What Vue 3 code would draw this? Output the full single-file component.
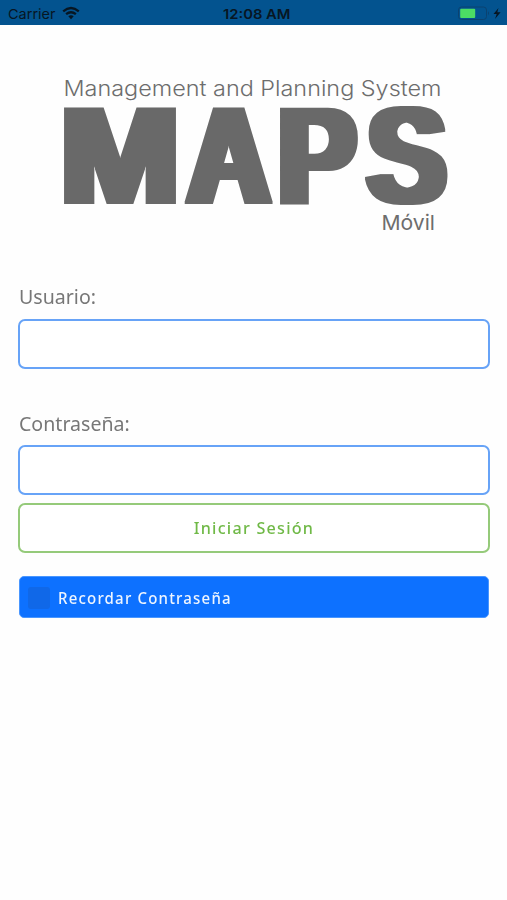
<script setup>
import { ref } from 'vue'

const user = ref('')
const password = ref('')
const remember = ref(false)
</script>

<template>
  <div class="screen">
    <header class="status">
      <div class="left">
        <svg width="240" height="25" viewBox="0 0 240 25" class="carrier">
          <text x="8" y="18.5" textLength="47.5" lengthAdjust="spacingAndGlyphs">Carrier</text>
          <g fill="none" stroke="#071623" stroke-width="2.3">
            <path d="M63.2 11.3Q71 4.700 78.800 11.300" />
            <path d="M66.100 14.200Q71 10.300 75.900 14.200" />
          </g>
          <path d="M68.300 16.300Q71 14.200 73.700 16.300L71 19.200Z" fill="#071623" />
        </svg>
      </div>
      <svg width="70" height="25" viewBox="0 0 70 25" class="time">
        <text x="1" y="18.500" textLength="67.500" lengthAdjust="spacingAndGlyphs">12:08 AM</text>
      </svg>
      <svg width="50" height="25" viewBox="0 0 50 25" class="battery">
        <rect x="1.500" y="7" width="28" height="12.500" rx="3" fill="none" stroke="#0b4270" />
        <path d="M31 11.200Q33 13.200 31 15.200Z" fill="#0b4270" />
        <rect x="3.200" y="8.700" width="15" height="9.200" rx="1" fill="#4cdc64" />
        <path d="M41.500 8L36.500 14H39.700L38 19L43.600 12.300H40.300Z" fill="#071623" />
      </svg>
    </header>

    <svg class="logo" width="507" height="180" viewBox="0 65 507 180">
      <defs>
        <filter id="heavy" x="-10%" y="-10%" width="120%" height="120%" color-interpolation-filters="sRGB">
          <feMorphology operator="dilate" radius="6 1" />
        </filter>
      </defs>
      <text class="tagline" x="63.500" y="96" textLength="378" lengthAdjust="spacingAndGlyphs">Management and Planning System</text>
      <text class="name" y="203" filter="url(#heavy)"><tspan x="60.600" textLength="119" lengthAdjust="spacingAndGlyphs">M</tspan><tspan x="187.700" textLength="82" lengthAdjust="spacingAndGlyphs">A</tspan><tspan x="278.300" textLength="77.600" lengthAdjust="spacingAndGlyphs">P</tspan><tspan x="367.500" textLength="78.600" lengthAdjust="spacingAndGlyphs">S</tspan></text>
      <text class="tagline sub" x="381.500" y="229.500" textLength="53.500" lengthAdjust="spacingAndGlyphs">Móvil</text>
    </svg>

    <form class="form" @submit.prevent>
      <label class="caption" for="user">Usuario:</label>
      <input id="user" v-model="user" class="field" type="text" />
      <label class="caption second" for="password">Contraseña:</label>
      <input id="password" v-model="password" class="field" type="password" />
      <button class="submit" type="submit"><span class="action">Iniciar Sesión</span></button>
      <button class="remember" type="button" @click="remember = !remember">
        <span class="box" :class="{ on: remember }"></span>
        <span class="remember-text">Recordar Contraseña</span>
      </button>
    </form>
  </div>
</template>

<style>
body {
  background: #fefefe;
}
</style>

<style scoped>
.screen {
  min-height: 900px;
  font-family: "Noto Sans", sans-serif;
}
.status {
  height: 25px;
  display: flex;
  justify-content: space-between;
  background: #03538f;
}
.status svg {
  display: block;
}
.left {
  width: 222px;
  overflow: hidden;
}
.carrier text,
.time text {
  font-family: Inter, sans-serif;
  font-size: 13.500px;
  fill: #071623;
}
.time text {
  font-weight: 600;
}
.battery {
  margin-left: 165px;
}
.logo {
  display: block;
  margin-top: 40px;
}
.tagline {
  font-family: Inter, sans-serif;
  font-weight: 300;
  font-size: 21px;
  fill: #6d6d6d;
}
.sub {
  font-weight: 400;
  font-size: 20.500px;
}
.name {
  font-family: "Liberation Sans", sans-serif;
  font-weight: 700;
  font-size: 138px;
  fill: #696969;
}
.form {
  display: flex;
  flex-direction: column;
  padding: 37px 17px 0 18px;
}
.caption {
  height: 28px;
  line-height: 28px;
  margin-bottom: 9px;
  margin-left: 1px;
  font-size: 20.500px;
  color: #777;
  transform: scaleX(0.955);
  transform-origin: left;
}
.second {
  margin-top: 40px;
  margin-bottom: 8px;
}
.field,
.submit {
  box-sizing: border-box;
  width: 100%;
  height: 50px;
  padding: 0 10px;
  border: 2px solid #67a3f7;
  border-radius: 7px;
  background: #fff;
  font-size: 18px;
  outline: none;
}
.submit {
  margin-top: 8px;
  border-color: #95ca7a;
  color: #70b947;
  font-family: inherit;
  font-size: 17px;
  font-weight: 500;
  letter-spacing: 1.300px;
}
.action {
  display: block;
  padding-bottom: 2px;
  transform: scaleX(0.95);
}
.remember {
  display: flex;
  align-items: center;
  height: 42px;
  margin: 23px 1px 0;
  padding: 1px 9px 0 8px;
  border: 1px solid #4996ff;
  border-radius: 5px;
  background: #0d71ff;
  color: #eef5ff;
  font-family: inherit;
  font-size: 16.500px;
  font-weight: 500;
  letter-spacing: 1.300px;
}
.remember-text {
  transform: scaleX(0.91);
  transform-origin: left;
}
.box {
  width: 22px;
  height: 22px;
  margin-right: 8px;
  border-radius: 3px;
  background: #1068e8;
}
.box.on {
  background: #fff;
}
</style>
